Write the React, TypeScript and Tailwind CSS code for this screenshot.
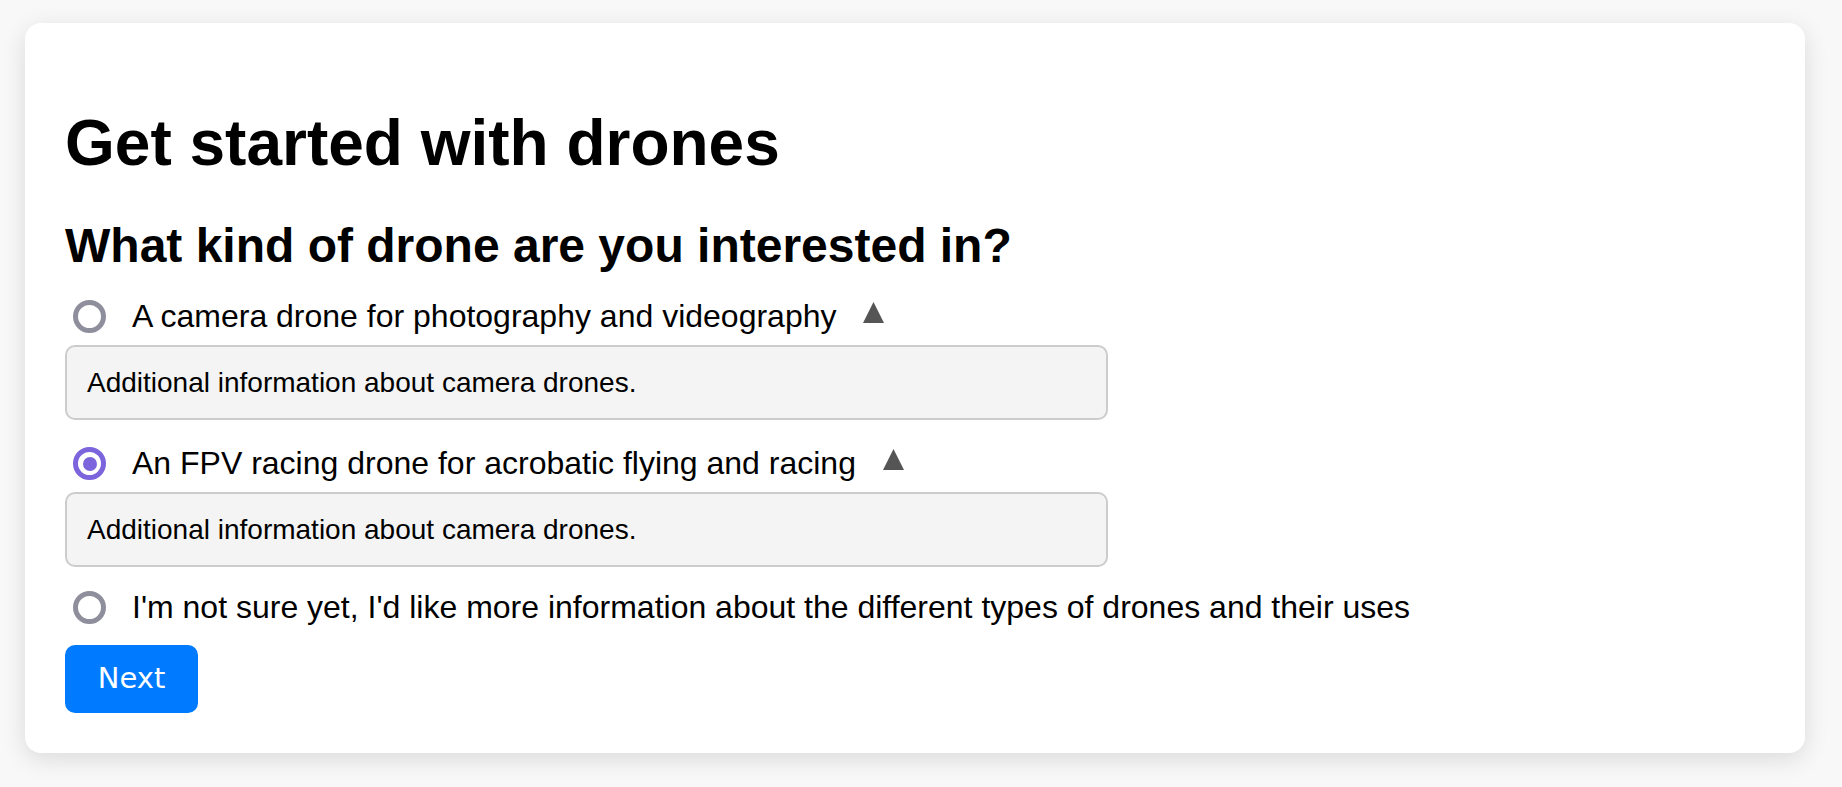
import { useState } from "react"

type Option = {
    id: string
    label: string
    info?: string
}

const options: Option[] = [
    { id: "camera", label: "A camera drone for photography and videography", info: "Additional information about camera drones." },
    { id: "fpv", label: "An FPV racing drone for acrobatic flying and racing", info: "Additional information about camera drones." },
    { id: "unsure", label: "I'm not sure yet, I'd like more information about the different types of drones and their uses" },
]

function Radio({ checked }: { checked: boolean }) {
    return (
        <span
            className={
                checked
                    ? "ml-2 flex h-[33px] w-[33px] shrink-0 items-center justify-center rounded-full border-[5px] border-[#7b64dc]"
                    : "ml-2 flex h-[33px] w-[33px] shrink-0 items-center justify-center rounded-full border-[5px] border-[#8f8e9c]"
            }
        >
            {checked && <span className="h-[14px] w-[14px] rounded-full bg-[#7b64dc]" />}
        </span>
    )
}

function Caret() {
    return (
        <svg width="21" height="21" viewBox="0 0 21 21" className="mb-[9px] ml-[27px] shrink-0">
            <polygon points="10.5,0 21,21 0,21" fill="#555555" />
        </svg>
    )
}

export default function App() {
    const [selected, setSelected] = useState<string>("fpv")

    return (
        <div className="min-h-screen bg-[#f8f8f8] pt-[23px] pl-[25px] pr-[37px] pb-8 font-['Liberation_Sans',Arial,sans-serif] text-black">
            <div className="rounded-2xl bg-white p-10 shadow-[0_6px_24px_rgba(0,0,0,0.12)]">
                <h1 className="mt-[43px] text-[64px] font-bold leading-[74px]">Get started with drones</h1>
                <h2 className="mt-[38px] text-[48px] font-bold leading-[55px]">What kind of drone are you interested in?</h2>

                {options.map((option, i) => (
                    <div key={option.id} className={i === 2 ? "mt-[22px]" : "mt-[25px]"}>
                        <label
                            className="flex h-[37px] cursor-pointer items-center text-[32px] leading-[37px]"
                            onClick={() => setSelected(option.id)}
                        >
                            <Radio checked={selected === option.id} />
                            <span className="ml-[26px] whitespace-nowrap">{option.label}</span>
                            {option.info && <Caret />}
                        </label>
                        {option.info && (
                            <div className="mt-[10px] w-[1043px] rounded-[10px] border-2 border-[#cccccc] bg-[#f4f4f4] px-5 py-5 text-[28px] leading-[31px]">
                                {option.info}
                            </div>
                        )}
                    </div>
                ))}

                <button className="mt-[19px] flex h-[68px] w-[133px] items-center justify-center rounded-[10px] bg-[#007bff] font-['DejaVu_Sans',sans-serif] text-[29px] text-white">
                    Next
                </button>
            </div>
        </div>
    )
}
